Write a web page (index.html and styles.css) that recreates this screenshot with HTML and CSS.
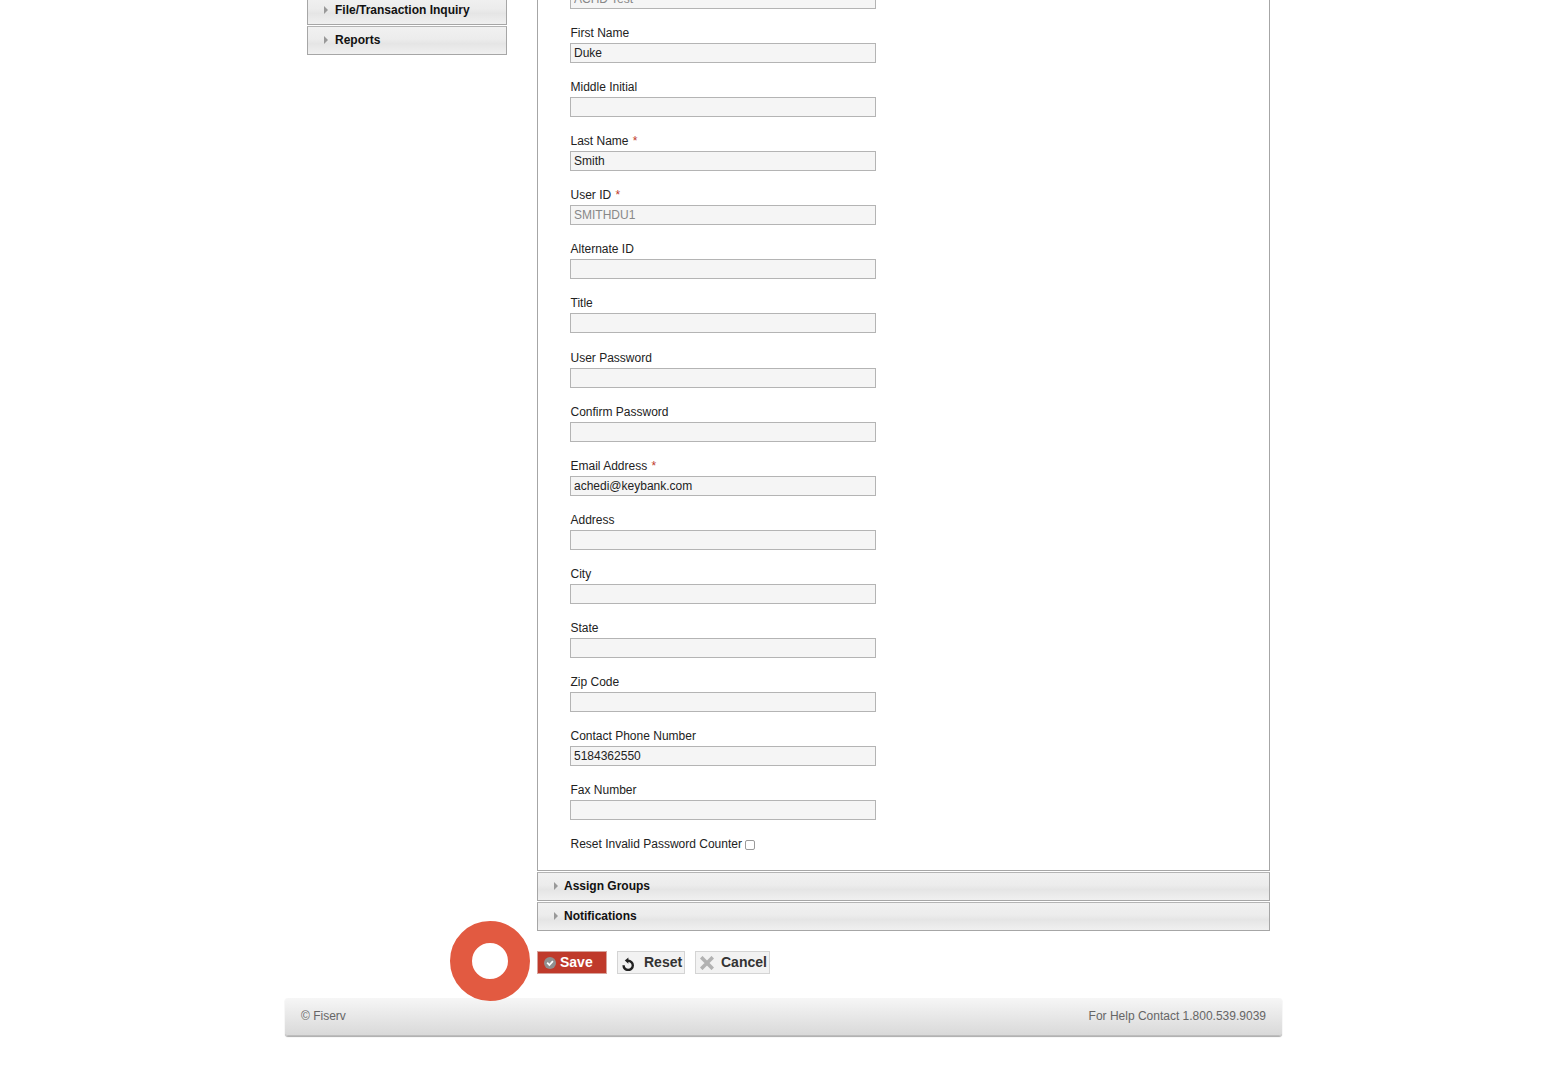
FILE: index.html
```html
<!DOCTYPE html>
<html lang="en">
<head>
<meta charset="UTF-8">
<meta name="viewport" content="width=device-width, initial-scale=1.0">
<title>Edit User</title>
<link rel="stylesheet" href="styles.css">
</head>
<body>
<div class="page">
  <div class="layout">
    <div class="sidebar">
      <div class="bar side-bar"><span class="arrow"></span>File/Transaction Inquiry</div>
      <div class="bar side-bar"><span class="arrow"></span>Reports</div>
    </div>

    <div class="main">
      <div class="panel">
        <div class="field first-field">
          <input class="input disabled" type="text" value="ACHD Test" disabled>
        </div>
        <div class="field">
          <label class="label">First Name</label>
          <input class="input" type="text" value="Duke">
        </div>
        <div class="field">
          <label class="label">Middle Initial</label>
          <input class="input" type="text">
        </div>
        <div class="field">
          <label class="label">Last Name <span class="req">*</span></label>
          <input class="input" type="text" value="Smith">
        </div>
        <div class="field">
          <label class="label">User ID <span class="req">*</span></label>
          <input class="input disabled" type="text" value="SMITHDU1" disabled>
        </div>
        <div class="field">
          <label class="label">Alternate ID</label>
          <input class="input" type="text">
        </div>
        <div class="field wide-gap">
          <label class="label">Title</label>
          <input class="input" type="text">
        </div>
        <div class="field">
          <label class="label">User Password</label>
          <input class="input" type="text">
        </div>
        <div class="field">
          <label class="label">Confirm Password</label>
          <input class="input" type="text">
        </div>
        <div class="field">
          <label class="label">Email Address <span class="req">*</span></label>
          <input class="input" type="text" value="achedi@keybank.com">
        </div>
        <div class="field">
          <label class="label">Address</label>
          <input class="input" type="text">
        </div>
        <div class="field">
          <label class="label">City</label>
          <input class="input" type="text">
        </div>
        <div class="field">
          <label class="label">State</label>
          <input class="input" type="text">
        </div>
        <div class="field">
          <label class="label">Zip Code</label>
          <input class="input" type="text">
        </div>
        <div class="field">
          <label class="label">Contact Phone Number</label>
          <input class="input" type="text" value="5184362550">
        </div>
        <div class="field">
          <label class="label">Fax Number</label>
          <input class="input" type="text">
        </div>
        <div class="check-row">
          <label class="label">Reset Invalid Password Counter</label>
          <span class="check"></span>
        </div>
      </div>

      <div class="bar main-bar"><span class="arrow"></span>Assign Groups</div>
      <div class="bar main-bar"><span class="arrow"></span>Notifications</div>

      <div class="actions">
        <div class="marker"></div>
        <button class="btn save">
          <svg class="save-icon" viewBox="0 0 12 12" width="12" height="12">
            <circle cx="6" cy="6" r="6" fill="#8f8f8f"/>
            <path d="M3.2 5.6 L5.4 8 L8.9 4.2" fill="none" stroke="#fff" stroke-width="1.8"/>
          </svg>Save
        </button>
        <button class="btn reset">
          <svg class="reset-icon" viewBox="0 0 14 14" width="14" height="14">
            <path d="M6 3.8 A4.6 4.6 0 1 1 1.6 8.2" fill="none" stroke="#222" stroke-width="2.4"/>
            <path d="M6.4 0.4 L6.4 6.8 L2.8 3.6 Z" fill="#222"/>
          </svg>Reset
        </button>
        <button class="btn cancel">
          <svg class="cancel-icon" viewBox="0 0 14 14" width="14" height="14">
            <path d="M1.2 1.2 L12.8 12.8 M12.8 1.2 L1.2 12.8" fill="none" stroke="#b2b2b2" stroke-width="3.6"/>
          </svg>Cancel
        </button>
      </div>
    </div>
  </div>

  <div class="footer">
    <span>© Fiserv</span>
    <span>For Help Contact 1.800.539.9039</span>
  </div>
</div>
</body>
</html>
```

FILE: styles.css
```css
html, body {
  height: 100%;
}
body {
  font-family: "Liberation Sans", Arial, sans-serif;
  font-size: 12px;
  color: #222;
  background-color: #fff;
  margin: 0;
  padding: 0;
  overflow: hidden;
}
.page {
  width: 997px;
  margin-left: 285px;
  margin-top: -30px;
}
.layout {
  display: flex;
  gap: 30px;
  padding-left: 22px;
  padding-right: 12px;
}
.sidebar {
  width: 200px;
  flex-shrink: 0;
  display: flex;
  flex-direction: column;
  gap: 1px;
  padding-top: 25px;
}
.main {
  flex: 1;
}
.bar {
  box-sizing: border-box;
  display: flex;
  align-items: center;
  font-weight: bold;
  color: #111;
  border: 1px solid #a6a6a6;
  border-top-color: #b4b4b4;
  background: linear-gradient(to bottom, #f1f1f1 0%, #ececec 45%, #e5e5e5 62%, #f0f0f0 100%);
}
.side-bar {
  height: 29px;
  padding-left: 16px;
  padding-bottom: 1px;
}
.side-bar:first-child {
  height: 30px;
  padding-bottom: 0;
}
.side-bar .arrow {
  margin-right: 7px;
}
.main-bar {
  height: 29px;
  margin-top: 1px;
  padding-left: 16px;
  padding-bottom: 1px;
}
.arrow {
  width: 0;
  height: 0;
  margin-right: 6px;
  border-left: 4px solid #999;
  border-top: 4px solid transparent;
  border-bottom: 4px solid transparent;
}
.panel {
  box-sizing: border-box;
  height: 901px;
  padding: 0 32px;
  border: 1px solid #a6a6a6;
  border-top: 0;
}
.first-field {
  padding-top: 19px;
}
.field {
  margin-bottom: 17px;
}
.wide-gap {
  margin-bottom: 18px;
}
.label {
  display: block;
  height: 14px;
  line-height: 14px;
  margin-bottom: 3px;
  margin-left: 0.5px;
  color: #222;
}
.req {
  color: #c0392b;
  margin-left: 1px;
}
.input {
  display: block;
  box-sizing: border-box;
  width: 306px;
  height: 20px;
  padding: 0 3px;
  margin: 0;
  font-family: inherit;
  font-size: 12px;
  color: #222;
  background-color: #f5f5f5;
  border: 1px solid #b4b4b4;
  border-radius: 0;
  outline: none;
}
.disabled {
  color: #888;
}
.check-row {
  display: flex;
  align-items: center;
  gap: 3px;
}
.check-row .label {
  margin-bottom: 0;
}
.check {
  box-sizing: border-box;
  width: 10px;
  height: 10px;
  margin-top: 2px;
  background-color: #fff;
  border: 1px solid #9a9a9a;
  border-radius: 2px;
}
.actions {
  display: flex;
  align-items: center;
  gap: 10px;
  position: relative;
  margin-top: 20px;
  height: 23px;
}
.marker {
  position: absolute;
  left: -87px;
  top: -30px;
  width: 36px;
  height: 36px;
  border: 22px solid #e25a41;
  border-radius: 50%;
  box-sizing: content-box;
}
.btn {
  display: flex;
  align-items: center;
  box-sizing: border-box;
  height: 23px;
  padding: 0 0 2px 4px;
  font-family: inherit;
  font-size: 14px;
  font-weight: bold;
  color: #333;
  background-color: #f2f2f2;
  border: 1px solid #d4d4d4;
}
.btn svg {
  flex-shrink: 0;
}
.save {
  width: 70px;
  padding-left: 6px;
  color: #fff;
  background-color: #bf3a2b;
  border-color: #d7a29b;
}
.save-icon {
  margin-right: 4px;
  margin-top: 2px;
}
.reset {
  width: 68px;
}
.reset-icon {
  margin-right: 8px;
  margin-top: 4px;
}
.cancel {
  width: 75px;
}
.cancel-icon {
  margin-right: 7px;
  margin-top: 3px;
}
.footer {
  box-sizing: border-box;
  display: flex;
  justify-content: space-between;
  align-items: center;
  height: 38px;
  margin-top: 24px;
  padding: 0 16px;
  padding-bottom: 2px;
  color: #666;
  background: linear-gradient(to bottom, #f6f6f6 0%, #d9d9d9 100%);
  border-bottom: 1px solid #bdbdbd;
  border-radius: 3px;
  box-shadow: 0 1px 1px #aaa;
}
```
